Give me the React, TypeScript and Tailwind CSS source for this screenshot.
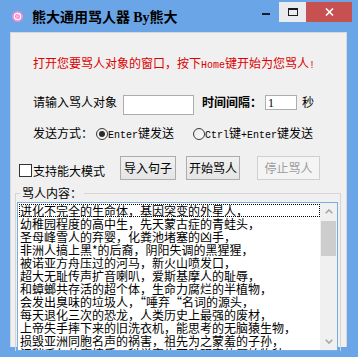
import React from "react";

const L = ({ children }: { children: React.ReactNode }) => (
  <span className="font-['Liberation_Mono',monospace] text-[10px]">{children}</span>
);

const lines = [
  "进化不完全的生命体，基因突变的外星人，",
  "幼稚园程度的高中生，先天蒙古症的青蛙头，",
  "圣母峰雪人的弃婴，化粪池堵塞的凶手，",
  "非洲人搞上黑*的后裔，阴阳失调的黑猩猩，",
  "被诺亚方舟压过的河马，新火山喷发口，",
  "超大无耻传声扩音喇叭，爱斯基摩人的耻辱，",
  "和蟑螂共存活的超个体，生命力腐烂的半植物，",
  "会发出臭味的垃圾人，“唾弃“名词的源头，",
  "每天退化三次的恐龙，人类历史上最强的废材，",
  "上帝失手摔下来的旧洗衣机，能思考的无脑猿生物，",
  "损毁亚洲同胞名声的祸害，祖先为之蒙羞的子孙，",
  "污秽千年的腐植质，科学家也不敢研究的原始物种",
];

function Radio({ checked }: { checked?: boolean }) {
  return (
    <div className="w-[12px] h-[12px] rounded-full border border-[#3a3a3a] bg-gradient-to-br from-[#e6e6e6] to-white flex items-center justify-center shrink-0">
      {checked && <div className="w-[6px] h-[6px] rounded-full bg-[#2a2a2a]" />}
    </div>
  );
}

function Btn({ w, disabled, children }: { w: string; disabled?: boolean; children: React.ReactNode }) {
  return (
    <div
      className={
        "h-[24px] flex items-center justify-center border shrink-0 " +
        w +
        (disabled
          ? " border-[#cfcfcf] bg-[#f4f4f4] text-[#9c9c9c]"
          : " border-[#acacac] bg-gradient-to-b from-[#f0f0f0] to-[#e5e5e5] text-black")
      }
    >
      {children}
    </div>
  );
}

export default function App() {
  return (
    <div className="w-[358px] h-[357px] bg-[#6aa5e7] flex flex-col overflow-hidden font-['Noto_Sans_CJK_SC',sans-serif] text-[12px] leading-[12px] text-black">
      {/* title bar */}
      <div className="h-[32px] flex items-start shrink-0">
        <svg className="ml-[12px] mt-[11px] shrink-0" width="11" height="11" viewBox="0 0 11 11">
          <circle cx="5.5" cy="5.5" r="5.5" fill="#ec8fd3" />
          <circle cx="5.5" cy="5.5" r="3.2" fill="none" stroke="#fff" strokeWidth="1.2" />
          <circle cx="5.5" cy="5.5" r="1.5" fill="#f6b8e6" />
        </svg>
        <div className="ml-[9px] mt-[8px] text-[14px] leading-[16px] font-bold whitespace-nowrap">
          熊大通用骂人器 <span className="font-['Liberation_Serif',serif]">By</span>熊大
        </div>
        <div className="ml-auto mr-[6px] mt-[2px] flex">
          <div className="w-[26px] h-[20px] flex items-center justify-center">
            <div className="w-[8px] h-[2px] bg-[#1b1b28] mt-[3px]" />
          </div>
          <div className="w-[27px] h-[20px] bg-[#e9ebee] flex items-center justify-center">
            <div className="w-[10px] h-[8px] border border-t-2 border-[#1b1b1b]" />
          </div>
          <div className="w-[46px] h-[20px] bg-[#c75050] flex items-center justify-center">
            <svg width="9" height="8" viewBox="0 0 9 8">
              <path d="M1 0.5 L8 7.5 M8 0.5 L1 7.5" stroke="#fff" strokeWidth="1.6" />
            </svg>
          </div>
        </div>
      </div>

      {/* client area */}
      <div className="ml-[10px] w-[337px] h-[315px] bg-[#f0f0f0] border border-b-0 border-[#d8d8d8] flex flex-col shrink-0">
        <div className="mt-[24px] pl-[22px] text-[#dc0000] whitespace-nowrap">
          打开您要骂人对象的窗口，按下<L>Home</L>键开始为您骂人<L>!</L>
        </div>

        {/* row 2 */}
        <div className="mt-[23px] flex items-start whitespace-nowrap">
          <div className="ml-[22px] mt-[1px] w-[84px]">请输入骂人对象</div>
          <div className="ml-[6px] w-[71px] h-[20px] bg-white border border-[#abadb3]" />
          <div className="ml-[8px] mt-[1px] font-bold">时间间隔：</div>
          <div className="ml-[3px] w-[32px] h-[15px] bg-white border border-[#abadb3] pl-[2px] flex items-center">
            <span className="font-['Liberation_Serif',serif] text-[12px] leading-[12px]">1</span>
          </div>
          <div className="ml-[5px] mt-[1px]">秒</div>
        </div>

        {/* row 3 */}
        <div className="mt-[12px] flex items-start whitespace-nowrap">
          <div className="ml-[22px] w-[60px]">发送方式：</div>
          <div className="ml-[3px] mt-[1px]">
            <Radio checked />
          </div>
          <div>
            <L>Enter</L>键发送
          </div>
          <div className="ml-[19px] mt-[1px]">
            <Radio />
          </div>
          <div>
            <L>Ctrl</L>键<L>+Enter</L>键发送
          </div>
        </div>

        {/* row 4 */}
        <div className="mt-[14px] flex items-start whitespace-nowrap">
          <div className="ml-[8px] mt-[8px] w-[13px] h-[13px] bg-white border border-[#333333] shrink-0" />
          <div className="ml-[1px] mt-[9px] w-[72px]">支持能大模式</div>
          <div className="ml-[15px]">
            <Btn w="w-[56px]">导入句子</Btn>
          </div>
          <div className="ml-[10px]">
            <Btn w="w-[54px]">开始骂人</Btn>
          </div>
          <div className="ml-[17px]">
            <Btn w="w-[63px]" disabled>
              停止骂人
            </Btn>
          </div>
        </div>

        {/* group box */}
        <div className="mt-[13px] ml-[4px] w-[326px] relative border-t border-l border-r border-[#d5d5d5] pt-[8px] pl-[1px] flex-1">
          <div className="absolute left-[4px] top-[-7px] px-[2px] bg-[#f0f0f0] leading-[12px] whitespace-nowrap">
            骂人内容：
          </div>
          <div className="w-[321px] h-[149px] bg-white border border-[#7aaee3] flex overflow-hidden">
            <div className="flex-1 pt-[1px] pl-[1px] flex flex-col overflow-hidden">
              {lines.map((t, i) => (
                <div
                  key={i}
                  className={
                    "h-[13px] shrink-0 leading-[13px] pl-[1px] whitespace-nowrap " +
                    (i === 0 ? "outline-1 outline-dotted outline-black -outline-offset-1" : "")
                  }
                >
                  {t}
                </div>
              ))}
            </div>
            <div className="w-[17px] bg-[#f0f0f0] flex flex-col shrink-0">
              <div className="h-[17px] flex items-center justify-center">
                <svg width="8" height="5" viewBox="0 0 8 5">
                  <path d="M0.7 4.3 L4 1 L7.3 4.3" fill="none" stroke="#a6a6a6" strokeWidth="1.6" />
                </svg>
              </div>
              <div className="mt-[1px] mx-[1px] h-[35px] bg-[#cdcdcd]" />
              <div className="mt-auto h-[17px] flex items-center justify-center">
                <svg width="8" height="5" viewBox="0 0 8 5">
                  <path d="M0.7 0.7 L4 4 L7.3 0.7" fill="none" stroke="#a6a6a6" strokeWidth="1.6" />
                </svg>
              </div>
            </div>
          </div>
        </div>
      </div>
    </div>
  );
}
